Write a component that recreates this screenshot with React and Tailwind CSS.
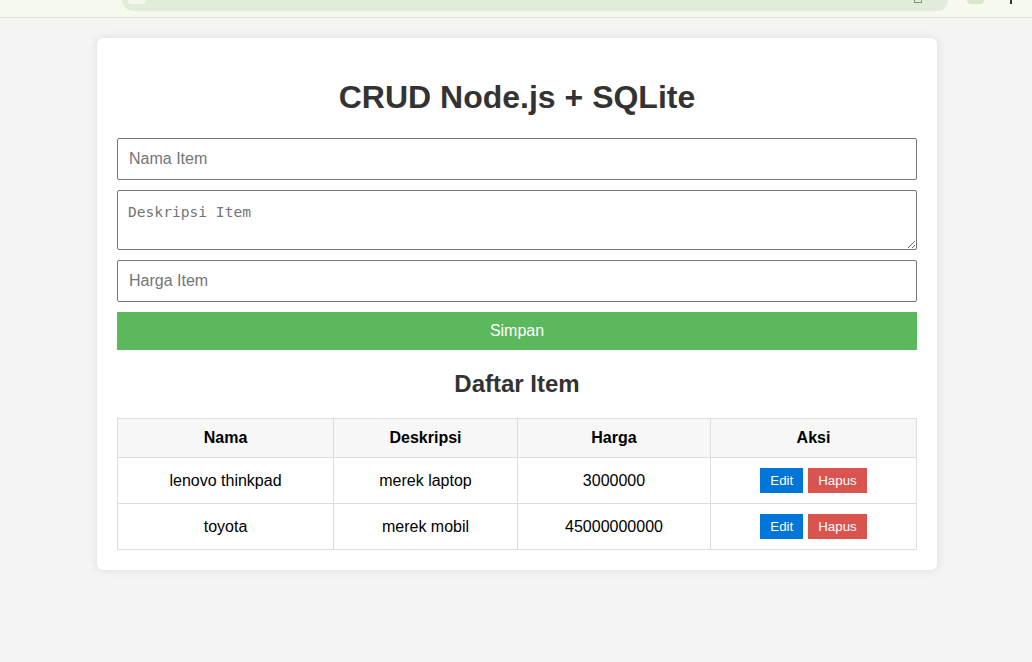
import { useState } from "react";

const items = [
  { id: 1, nama: "lenovo thinkpad", deskripsi: "merek laptop", harga: 3000000 },
  { id: 2, nama: "toyota", deskripsi: "merek mobil", harga: 45000000000 },
];

const App = () => {
  const [nama, setNama] = useState("");
  const [deskripsi, setDeskripsi] = useState("");
  const [harga, setHarga] = useState("");

  return (
    <div className="min-h-[662px] bg-[#f4f4f4] font-['Liberation_Sans',Arial,sans-serif]">
      {/* browser chrome remnant */}
      <div className="h-[18px] bg-[#f6f9ee] border-b border-[#dcdfd6] flex items-start">
        <div className="ml-[122px] w-[826px] h-[11px] bg-[#e2ecda] rounded-b-[12px] flex items-start justify-between px-[6px]">
          <div className="w-[18px] h-[4px] rounded-b-full bg-[#f4f7ee]" />
          <div className="mr-[20px] w-[8px] h-[3px] border-b border-x border-[#8a8f86]" />
        </div>
        <div className="ml-[19px] w-[17px] h-[4px] rounded-b-full bg-[#d8e6cc]" />
        <div className="ml-[26px] w-[2px] h-[4px] bg-[#333]" />
      </div>

      <div className="pt-[20px] pl-[2px] flex justify-center">
        <div className="w-[840px] bg-white rounded-[6px] shadow-[0_0_10px_rgba(0,0,0,0.1)] p-[20px]">
          <h1 className="text-center text-[32px] font-bold text-[#333] leading-[37px] mt-[21px] mb-[22px]">
            CRUD Node.js + SQLite
          </h1>

          <form className="flex flex-col gap-[10px]" onSubmit={(e) => e.preventDefault()}>
            <input
              type="text"
              value={nama}
              onChange={(e) => setNama(e.target.value)}
              placeholder="Nama Item"
              className="w-full h-[42px] px-[11px] border border-[#767676] rounded-[2px] text-[16px] text-black placeholder-[#757575] outline-none"
            />
            <textarea
              value={deskripsi}
              onChange={(e) => setDeskripsi(e.target.value)}
              placeholder="Deskripsi Item"
              className="w-full h-[60px] px-[10px] pt-[12px] pb-[10px] border border-[#767676] rounded-[2px] text-[14.6px] leading-[17px] font-['DejaVu_Sans_Mono',monospace] text-black placeholder-[#757575] outline-none resize-y block"
            />
            <input
              type="text"
              value={harga}
              onChange={(e) => setHarga(e.target.value)}
              placeholder="Harga Item"
              className="w-full h-[42px] px-[11px] border border-[#767676] rounded-[2px] text-[16px] text-black placeholder-[#757575] outline-none"
            />
            <button
              type="submit"
              className="w-full h-[38px] bg-[#5cb85c] text-white text-[16px]"
            >
              Simpan
            </button>
          </form>

          <h2 className="text-center text-[24px] font-bold text-[#333] leading-[28px] mt-[20px] mb-[20px]">
            Daftar Item
          </h2>

          <table className="w-full border-collapse text-[16px] text-black">
            <thead>
              <tr className="bg-[#f7f7f7]">
                <th className="w-[216px] border border-[#dddddd] p-[10px] font-bold leading-[18px]">Nama</th>
                <th className="w-[184px] border border-[#dddddd] p-[10px] font-bold leading-[18px]">Deskripsi</th>
                <th className="w-[193px] border border-[#dddddd] p-[10px] font-bold leading-[18px]">Harga</th>
                <th className="border border-[#dddddd] p-[10px] font-bold leading-[18px]">Aksi</th>
              </tr>
            </thead>
            <tbody>
              {items.map((item) => (
                <tr key={item.id}>
                  <td className="border border-[#dddddd] p-[10px] text-center leading-[18px]">{item.nama}</td>
                  <td className="border border-[#dddddd] p-[10px] text-center leading-[18px]">{item.deskripsi}</td>
                  <td className="border border-[#dddddd] p-[10px] text-center leading-[18px]">{item.harga}</td>
                  <td className="border border-[#dddddd] p-[10px] text-center">
                    <div className="flex justify-center gap-[5px]">
                      <button className="h-[25px] px-[10px] bg-[#0275d8] text-white text-[13.33px]">Edit</button>
                      <button className="h-[25px] px-[10px] bg-[#d9534f] text-white text-[13.33px]">Hapus</button>
                    </div>
                  </td>
                </tr>
              ))}
            </tbody>
          </table>
        </div>
      </div>
    </div>
  );
};

export default App;
